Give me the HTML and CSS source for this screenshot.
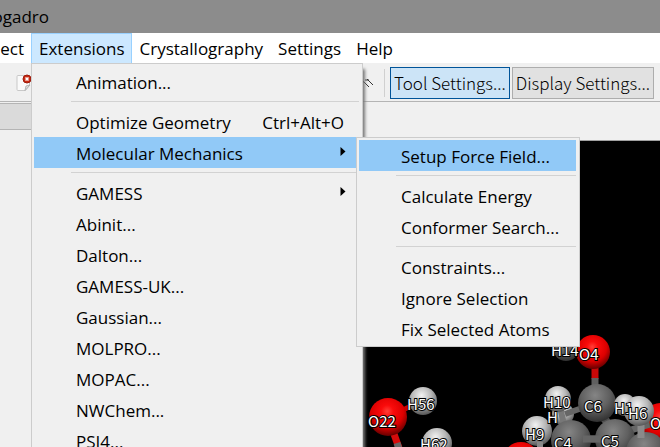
FILE: index.html
```html
<!DOCTYPE html>
<html lang="en">
<head>
<meta charset="utf-8">
<title>Avogadro</title>
<link rel="stylesheet" href="styles.css">
</head>
<body>
<div class="window">
  <header class="titlebar"><span class="title">Avogadro</span></header>
  <nav class="menubar" aria-label="Main menu">
    <div class="entry entry-cut"><button class="top">Select</button></div>
    <div class="entry">
      <button class="top open" aria-expanded="true">Extensions</button>
      <div class="menu">
        <button class="item">Animation...</button>
        <hr>
        <button class="item">Optimize Geometry<span class="keys">Ctrl+Alt+O</span></button>
        <div class="branch">
          <button class="item active">Molecular Mechanics<svg class="arrow" viewBox="0 0 5 9"><path d="M0 0L5 4.500L0 9Z"/></svg></button>
          <div class="menu submenu">
            <button class="item active">Setup Force Field...</button>
            <hr>
            <button class="item">Calculate Energy</button>
            <button class="item">Conformer Search...</button>
            <hr>
            <button class="item">Constraints...</button>
            <button class="item">Ignore Selection</button>
            <button class="item">Fix Selected Atoms</button>
          </div>
        </div>
        <hr>
        <button class="item">GAMESS<svg class="arrow" viewBox="0 0 5 9"><path d="M0 0L5 4.500L0 9Z"/></svg></button>
        <button class="item">Abinit...</button>
        <button class="item">Dalton...</button>
        <button class="item">GAMESS-UK...</button>
        <button class="item">Gaussian...</button>
        <button class="item">MOLPRO...</button>
        <button class="item">MOPAC...</button>
        <button class="item">NWChem...</button>
        <button class="item">PSI4...</button>
      </div>
    </div>
    <div class="entry"><button class="top">Crystallography</button></div>
    <div class="entry"><button class="top">Settings</button></div>
    <div class="entry"><button class="top">Help</button></div>
  </nav>
  <div class="toolbar">
    <button class="tool" aria-label="Close file">
      <svg width="16" height="18" viewBox="0 0 16 18">
        <path d="M1 2.500Q1 1.500 2 1.500H13.500V11L9.500 16.500H2Q1 16.500 1 15.500Z" fill="#fafafa" stroke="#c8c8c8"/>
        <path d="M9 16.500L10 12L14 11Z" fill="#e2e2e2" stroke="#b4b4b4"/>
        <circle cx="11" cy="5" r="4" fill="#c92a13" stroke="#9c1b0c"/>
        <path d="M9.500 3.500L12.500 6.500M12.500 3.500L9.500 6.500" stroke="#fff" stroke-width="1.500"/>
      </svg>
    </button>
    <button class="tool tool-end" aria-label="Measure">
      <svg width="12" height="12" viewBox="0 0 12 12"><path d="M1 4L7 10M5 2L11 8M3 3H7M1 4V6" fill="none" stroke="#333"/></svg>
    </button>
    <span class="divider"></span>
    <button class="push pressed">Tool Settings...</button>
    <button class="push">Display Settings...</button>
  </div>
  <main class="work">
    <aside class="dock"><div class="dock-title"></div></aside>
    <section class="view">
      <svg class="scene" width="297" height="306" viewBox="363 141 297 306">
        <defs>
          <radialGradient id="red" cx=".48" cy=".35" r=".65"><stop offset="0" stop-color="#ff4038"/><stop offset=".25" stop-color="#fa0b0b"/><stop offset=".65" stop-color="#dc0000"/><stop offset="1" stop-color="#650000"/></radialGradient>
          <radialGradient id="white" cx=".45" cy=".3" r=".75"><stop offset="0" stop-color="#f2f2f2"/><stop offset=".45" stop-color="#b8b8b8"/><stop offset="1" stop-color="#4a4a4a"/></radialGradient>
          <radialGradient id="grey" cx=".45" cy=".3" r=".75"><stop offset="0" stop-color="#858585"/><stop offset=".5" stop-color="#606060"/><stop offset="1" stop-color="#292929"/></radialGradient>
        </defs>
        <path d="M394 434L399 448" stroke="#d60b0b" stroke-width="7"/>
        <path d="M397 443L399 449" stroke="#666" stroke-width="7"/>
        <path d="M403 410L411 406" stroke="#c00" stroke-width="5"/>
        <path d="M411 406L418 403" stroke="#888" stroke-width="5"/>
        <circle cx="388" cy="417" r="19" fill="url(#red)"/>
        <circle cx="423" cy="401" r="14" fill="url(#white)"/>
        <circle cx="437" cy="443" r="15" fill="url(#white)"/>
        <path d="M572 350H588" stroke="#a11" stroke-width="5"/>
        <circle cx="566" cy="348" r="13" fill="url(#grey)"/>
        <path d="M595 365V379" stroke="#c80808" stroke-width="7"/>
        <path d="M595 378V392" stroke="#606060" stroke-width="7"/>
        <circle cx="593" cy="352" r="17" fill="url(#red)"/>
        <circle cx="563" cy="414" r="11" fill="url(#white)"/>
        <path d="M565 414L585 407" stroke="#666" stroke-width="6"/>
        <path d="M599 412L611 427" stroke="#505050" stroke-width="8"/>
        <circle cx="597" cy="403" r="19" fill="url(#grey)"/>
        <path d="M559 402L564 425" stroke="#777" stroke-width="6"/>
        <circle cx="558" cy="399" r="13" fill="url(#white)"/>
        <circle cx="625" cy="405" r="11" fill="url(#white)"/>
        <circle cx="661" cy="423" r="20" fill="url(#red)"/>
        <path d="M580 439H606M628 431L650 424" stroke="#666" stroke-width="7"/>
        <circle cx="571" cy="440" r="20" fill="url(#grey)"/>
        <circle cx="615" cy="439" r="20" fill="url(#grey)"/>
        <path d="M583 439H602" stroke="#666" stroke-width="7"/>
        <circle cx="646" cy="452" r="20" fill="url(#grey)"/>
        <path d="M641 419V438" stroke="#8a8a8a" stroke-width="7"/>
        <circle cx="639" cy="411" r="15" fill="url(#white)"/>
        <circle cx="537" cy="431" r="15" fill="url(#white)"/>
        <path d="M540 442V450" stroke="#888" stroke-width="6"/>
        <circle cx="521" cy="460" r="18" fill="url(#red)"/>
        <g class="labels">
          <text x="368" y="427">O22</text><text x="407" y="410">H56</text><text x="420" y="450">H62</text>
          <text x="551" y="356">H14</text><text x="579" y="360">O4</text><text x="543" y="408">H10</text>
          <text x="547" y="423">H</text><text x="584" y="412">C6</text><text x="614" y="414">H1</text>
          <text x="628" y="419">H6</text><text x="525" y="440">H9</text><text x="554" y="449">C4</text>
          <text x="601" y="447">C5</text><text x="650" y="429">O</text>
        </g>
      </svg>
    </section>
  </main>
</div>
</body>
</html>
```
FILE: styles.css
```css
* { box-sizing: border-box; }
body {
  margin: 0;
  overflow: hidden;
  font: 17px/24px "Open Sans", "Noto Sans", sans-serif;
  color: #000;
}
button { font: inherit; color: inherit; border: 0; padding: 0; background: none; white-space: nowrap; }
.window { display: flex; flex-direction: column; height: 100vh; background: #f0f0f0; }
.titlebar { flex: none; display: flex; height: 33px; background: #8c8c8c; }
.title { display: flex; justify-content: flex-end; width: 49px; padding-top: 5px; }
.menubar { flex: none; display: flex; height: 31px; background: #fff; border-bottom: 1px solid #f0f0f0; }
.entry { position: relative; }
.entry-cut { display: flex; justify-content: flex-end; width: 31px; }
.top { height: 31px; padding: 0 7px 0 8px; }
.top.open { background: #cce8ff; border: 1px solid #99d1ff; padding: 0 6px 0 7px; }
.menu {
  position: absolute;
  z-index: 2;
  top: 30px;
  left: 0;
  width: 332px;
  padding: 2px;
  background: #f0f0f0;
  border: 1px solid #ccc;
  box-shadow: 3px 5px 3px -1px #777;
}
.item { display: flex; align-items: center; width: 100%; height: 31px; padding: 2px 14px 0 42px; }
.item.active { background: #91c9f7; }
.keys { margin-left: auto; padding-right: 2px; }
.arrow { width: 6px; height: 9px; margin: 0 0 4px auto; }
.menu hr { height: 1px; margin: 4px 1px 4px 37px; border: 0; background: #d2d2d2; }
.branch { position: relative; }
.submenu { top: 0; left: 322px; width: 224px; padding: 2px; box-shadow: none; }
.submenu .item { width: calc(100% - 1px); }
.toolbar { flex: none; display: flex; align-items: center; height: 38px; padding-left: 16px; border-bottom: 1px solid #b4b4b4; }
.tool { display: flex; }
.tool-end { margin-left: 330px; }
.divider { width: 1px; height: 28px; margin: 0 5px 0 10px; background: #d0d0d0; }
.push {
  height: 32px;
  padding: 0 3px;
  font: 300 17px/24px "Noto Sans CJK JP", sans-serif;
  background: #e1e1e1;
  border: 1px solid #adadad;
  margin-right: 2px;
}
.pressed { background: #cce4f7; border-color: #005499; }
.work { flex: 1; display: flex; min-height: 0; }
.dock { width: 363px; padding-top: 1px; }
.dock-title { height: 27px; background: #dadada; border: solid #b4b4b4; border-width: 1px 0; }
.view { flex: 1; min-width: 0; margin-top: 38px; overflow: hidden; background: #000; border-top: 1px solid #a0a0a0; }
.scene { display: block; }
.labels text {
  font: 400 15px "Noto Sans CJK JP", sans-serif;
  fill: #fff;
  stroke: #000;
  stroke-width: 2px;
  paint-order: stroke;
}
```
